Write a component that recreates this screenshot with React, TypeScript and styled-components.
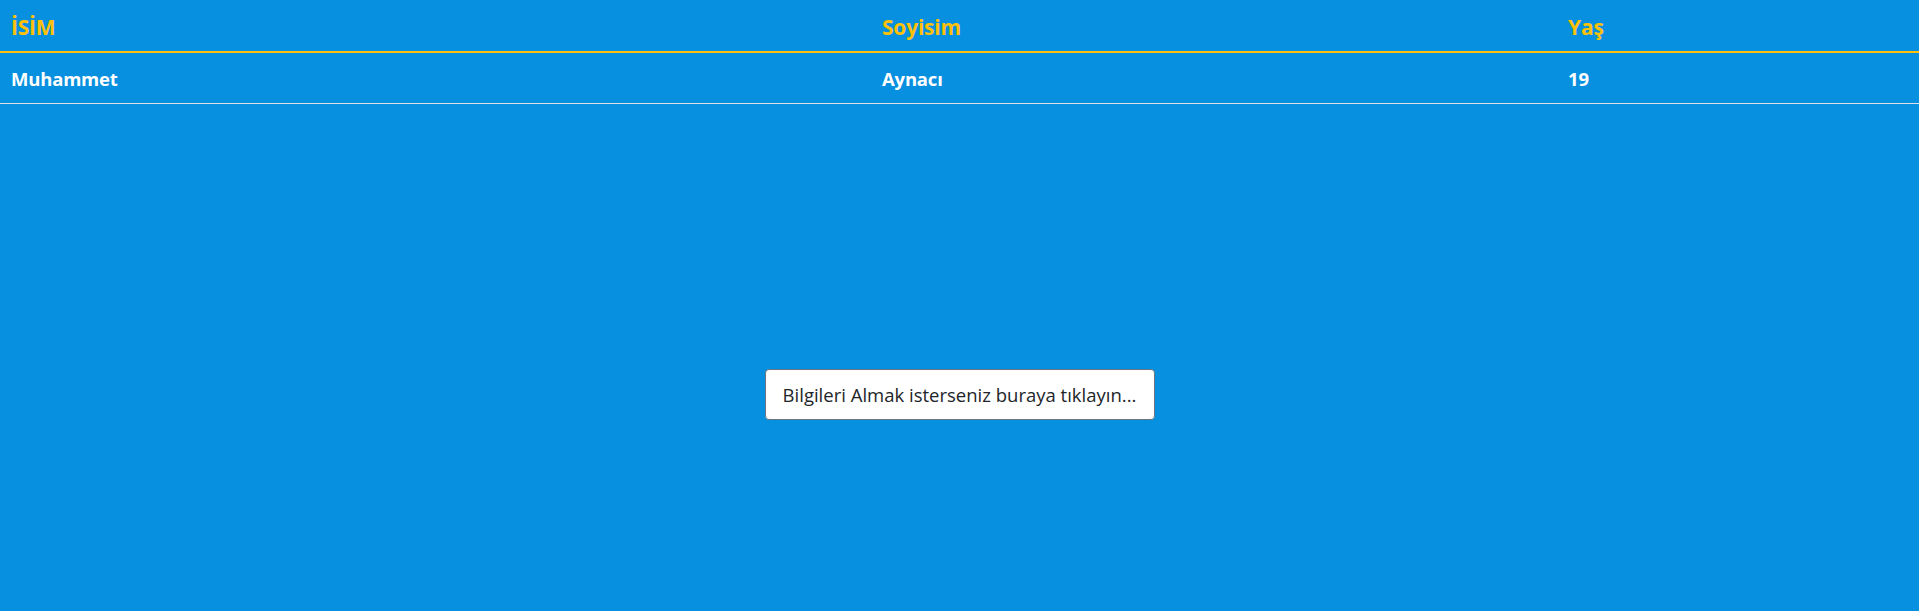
import React from "react";
import styled, { createGlobalStyle } from "styled-components";

const GlobalStyle = createGlobalStyle`
    html, body {
        margin: 0;
        padding: 0;
        background-color: #0790e0;
        font-family: "Open Sans", "Noto Sans", "Liberation Sans", sans-serif;
    }
`

export const Page = styled.div`
    min-height: 611px;
    background-color: #0790e0;
`
export const Table = styled.table`
    width: 100%;
    border-collapse: separate;
    border-spacing: 0;
    table-layout: fixed;
`
export const HeadCell = styled.th<{ w?: number }>`
    box-sizing: border-box;
    width: ${props => props.w ? `${props.w}px` : "auto"};
    height: 53px;
    padding: 2px 11px 0;
    text-align: left;
    font-weight: 700;
    font-size: 21px;
    color: #ffc107;
    border-bottom: 2px solid #ffc107;
    letter-spacing: -0.2px;
`
export const Cell = styled.td`
    box-sizing: border-box;
    height: 51px;
    padding: 0 11px;
    font-weight: 700;
    font-size: 18.5px;
    color: #fff;
    border-bottom: 1px solid #dee2e6;
    letter-spacing: -0.2px;
`
export const Actions = styled.div`
    display: flex;
    justify-content: center;
    padding-top: 265px;
`
export const Button = styled.button`
    width: 390px;
    height: 51px;
    background-color: #fff;
    border: 1px solid #6c757d;
    border-radius: 4px;
    font-family: "Open Sans", "Noto Sans", "Liberation Sans", sans-serif;
    font-size: 18.5px;
    color: #212529;
    cursor: pointer;
    padding: 0 16px;
`

const people = [{ name: "Muhammet", surname: "Aynacı", age: 19 }];

export default function App() {
    return (
        <Page>
            <GlobalStyle />
            <Table>
                <thead>
                    <tr>
                        <HeadCell w={871}>İSİM</HeadCell>
                        <HeadCell w={686}>Soyisim</HeadCell>
                        <HeadCell>Yaş</HeadCell>
                    </tr>
                </thead>
                <tbody>
                    {people.map(p => (
                        <tr key={p.name}>
                            <Cell>{p.name}</Cell>
                            <Cell>{p.surname}</Cell>
                            <Cell>{p.age}</Cell>
                        </tr>
                    ))}
                </tbody>
            </Table>
            <Actions>
                <Button>Bilgileri Almak isterseniz buraya tıklayın...</Button>
            </Actions>
        </Page>
    )
}
